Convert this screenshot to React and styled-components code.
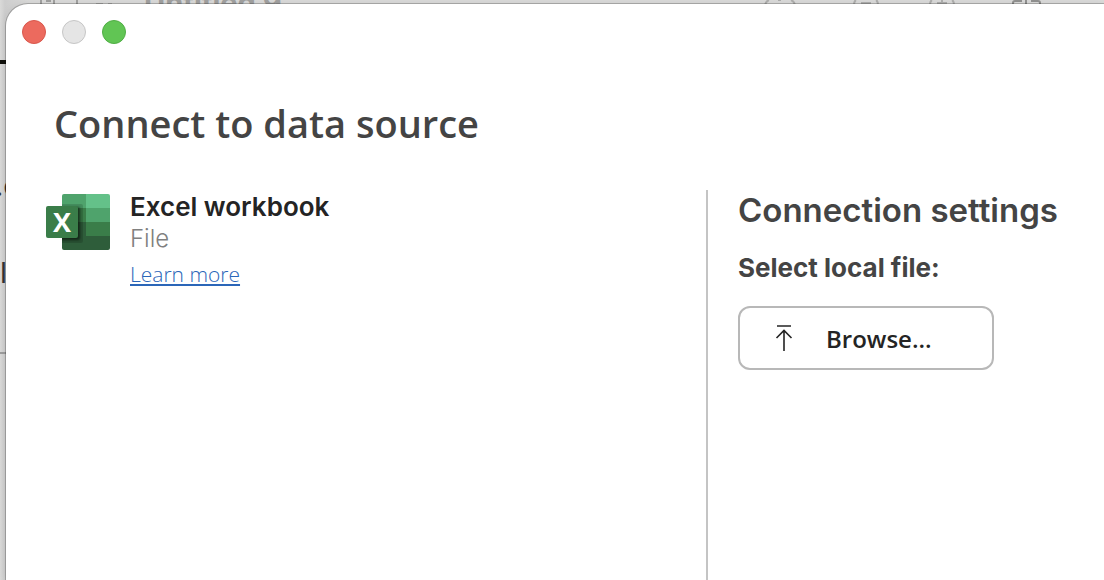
import React from 'react';
import styled, { createGlobalStyle } from 'styled-components';

const GlobalStyle = createGlobalStyle`
  * {
    box-sizing: border-box;
  }
  body {
    margin: 0;
    font-family: 'Inter', 'Liberation Sans', sans-serif;
    background-color: #d2d2d1;
  }
  h1,
  h2,
  h3,
  p {
    margin: 0;
  }
`;

const Desktop = styled.div`
  position: relative;
  min-height: 100vh;
  padding: 4px 0 0 6px;
  display: flex;
  overflow: hidden;
`;

/* the document window that sits under the dialog */
const Backdrop = styled.div`
  position: absolute;
  inset: 0;
  background: linear-gradient(90deg, #dadad9 0, #cdcdcd 5px, #dcdcdb 30px);
`;

const BackdropArt = styled.svg`
  position: absolute;
  top: 0;
  left: ${(props) => props.$left}px;
`;

const BackdropText = styled.span`
  position: absolute;
  top: ${(props) => props.$top}px;
  left: ${(props) => props.$left}px;
  font-size: 29px;
  line-height: 32px;
  font-weight: ${(props) => props.$weight || 400};
  color: ${(props) => props.$color};
`;

const BackdropRule = styled.div`
  position: absolute;
  top: ${(props) => props.$top}px;
  left: 0;
  width: 8px;
  height: ${(props) => props.$size}px;
  background-color: ${(props) => props.$color};
`;

const Dialog = styled.main`
  position: relative;
  flex: 1;
  display: flex;
  flex-direction: column;
  border-top-left-radius: 22px;
  background-color: #ffffff;
  box-shadow: 0 0 0 1px rgba(0, 0, 0, 0.22), 0 0 8px rgba(0, 0, 0, 0.1);
`;

const TitleBar = styled.div`
  display: flex;
  gap: 16px;
  padding: 16px;
`;

const WindowButton = styled.button`
  width: 24px;
  height: 24px;
  padding: 0;
  border: 1px solid ${(props) => props.$border};
  border-radius: 50%;
  background-color: ${(props) => props.$color};
`;

const Title = styled.h1`
  padding: 35px 48px 0;
  font-family: 'Open Sans', 'Noto Sans', sans-serif;
  font-size: 38px;
  line-height: 56px;
  font-weight: 600;
  color: #444444;
`;

const Body = styled.div`
  flex: 1;
  display: flex;
  padding-top: 39px;
`;

const Source = styled.section`
  flex: 1;
  display: flex;
  align-items: flex-start;
  gap: 20px;
  padding: 0 40px;
`;

const ExcelIcon = styled.svg`
  flex: none;
  margin-top: 4px;
`;

const SourceInfo = styled.div`
  display: flex;
  flex-direction: column;
  align-items: flex-start;
  padding-top: 1px;
`;

const SourceName = styled.h2`
  font-size: 26px;
  line-height: 32px;
  font-weight: 600;
  color: #242424;
`;

const SourceKind = styled.p`
  font-size: 24px;
  line-height: 32px;
  font-weight: 300;
  color: #808080;
`;

const LearnMore = styled.a`
  margin-top: 3px;
  font-family: 'Open Sans', 'Noto Sans', sans-serif;
  font-size: 21px;
  line-height: 32px;
  font-weight: 300;
  color: #2b66b8;
  text-decoration-thickness: 2px;
  text-underline-offset: 2px;
`;

const Settings = styled.section`
  flex: 0 0 398px;
  display: flex;
  flex-direction: column;
  align-items: flex-start;
  padding: 0 30px;
  border-left: 2px solid #c4c4c4;
`;

const SettingsTitle = styled.h2`
  font-size: 33px;
  line-height: 40px;
  font-weight: 600;
  color: #444444;
`;

const FieldLabel = styled.h3`
  margin: 22px 0;
  font-size: 26px;
  line-height: 32px;
  font-weight: 700;
  color: #444444;
`;

const BrowseButton = styled.button`
  display: flex;
  align-items: center;
  gap: 32px;
  width: 256px;
  height: 64px;
  padding: 2px 34px 0;
  border: 2px solid #b8b8b8;
  border-radius: 12px;
  background-color: #ffffff;
  font-family: 'Open Sans', 'Noto Sans', sans-serif;
  font-size: 24px;
  line-height: 32px;
  font-weight: 600;
  color: #242424;
`;

const windowButtons = [
  { label: 'Close', color: '#ec6a5e', border: '#d9574c' },
  { label: 'Minimize', color: '#e5e5e5', border: '#c6c6c6' },
  { label: 'Zoom', color: '#61c554', border: '#50ae45' }
];

const App = () => {
  return (
    <>
      <GlobalStyle />
      <Desktop>
        <Backdrop aria-hidden="true">
          <BackdropText $top={-13} $left={144} $weight={700} $color="#a2a2a1">
            Untitled 9
          </BackdropText>
          <BackdropArt $left={0} width="130" height="5" fill="none" stroke="#a2a2a1" strokeWidth="2">
            <path d="M41 0V5M46 1H51M54 0V5M77 0V5" />
            <path d="M96 4H103M108 4H112" stroke="#b4b4b3" />
          </BackdropArt>
          <BackdropArt $left={760} width="290" height="5" fill="none" stroke="#b0b0af" strokeWidth="2">
            <path d="M5 5Q6 1 9 0M35 5Q34 1 31 0M18 0H21M94 5Q94 1 96 0M118 5Q118 1 116 0M101 3H111M170 5Q170 1 172 0M194 5Q194 1 192 0M177 3H187M182 0V5" />
            <path d="M253 5V3Q253 1 255 1H262M266 0V5M271 1H278Q280 1 280 3V5" stroke="#929291" />
          </BackdropArt>
          <BackdropRule $top={60} $size={4} $color="#11110c" />
          <BackdropText $top={170} $left={-5} $color="#333333">
            .c
          </BackdropText>
          <BackdropText $top={257} $left={0} $color="#333333">
            l
          </BackdropText>
          <BackdropRule $top={352} $size={2} $color="#9c9c9c" />
        </Backdrop>

        <Dialog>
          <TitleBar>
            {windowButtons.map((button) => {
              return (
                <WindowButton
                  key={button.label}
                  type="button"
                  aria-label={button.label}
                  $color={button.color}
                  $border={button.border}
                />
              );
            })}
          </TitleBar>

          <Title>Connect to data source</Title>

          <Body>
            <Source>
              <ExcelIcon width="64" height="56" viewBox="0 0 64 56" aria-hidden="true">
                <defs>
                  <clipPath id="sheet">
                    <rect x="16" width="48" height="56" rx="2" />
                  </clipPath>
                  <filter id="soft" x="-20%" y="-20%" width="140%" height="140%">
                    <feGaussianBlur stdDeviation="1" />
                  </filter>
                </defs>
                <g clipPath="url(#sheet)">
                  <rect x="16" width="24" height="14" fill="#4fa36c" />
                  <rect x="40" width="24" height="14" fill="#64c189" />
                  <rect x="16" y="14" width="24" height="14" fill="#3a7d49" />
                  <rect x="40" y="14" width="24" height="14" fill="#4fa36c" />
                  <rect x="16" y="28" width="24" height="14" fill="#2e5d3a" />
                  <rect x="40" y="28" width="24" height="14" fill="#3a7d49" />
                  <rect x="16" y="42" width="48" height="14" fill="#2e5d3a" />
                  <rect x="10" y="10" width="27" height="39" rx="2" fill="#000000" opacity="0.14" />
                  <rect x="2" y="13" width="32" height="33" rx="2" fill="#000000" opacity="0.5" filter="url(#soft)" />
                </g>
                <rect y="12" width="32" height="32" rx="2" fill="#3a7d49" />
                <text
                  x="16"
                  y="38"
                  textAnchor="middle"
                  fontFamily="'Open Sans', sans-serif"
                  fontSize="27"
                  fontWeight="700"
                  fill="#ffffff"
                >
                  X
                </text>
              </ExcelIcon>
              <SourceInfo>
                <SourceName>Excel workbook</SourceName>
                <SourceKind>File</SourceKind>
                <LearnMore href="#learn-more">Learn more</LearnMore>
              </SourceInfo>
            </Source>

            <Settings>
              <SettingsTitle>Connection settings</SettingsTitle>
              <FieldLabel id="local-file">Select local file:</FieldLabel>
              <BrowseButton type="button" aria-describedby="local-file">
                <svg width="20" height="28" viewBox="0 0 20 28" fill="none" stroke="#242424" strokeWidth="1.6">
                  <path d="M3 1H17M10 6V26M2.500 13L10 5.500L17.500 13" />
                </svg>
                Browse...
              </BrowseButton>
            </Settings>
          </Body>
        </Dialog>
      </Desktop>
    </>
  );
};

export default App;
